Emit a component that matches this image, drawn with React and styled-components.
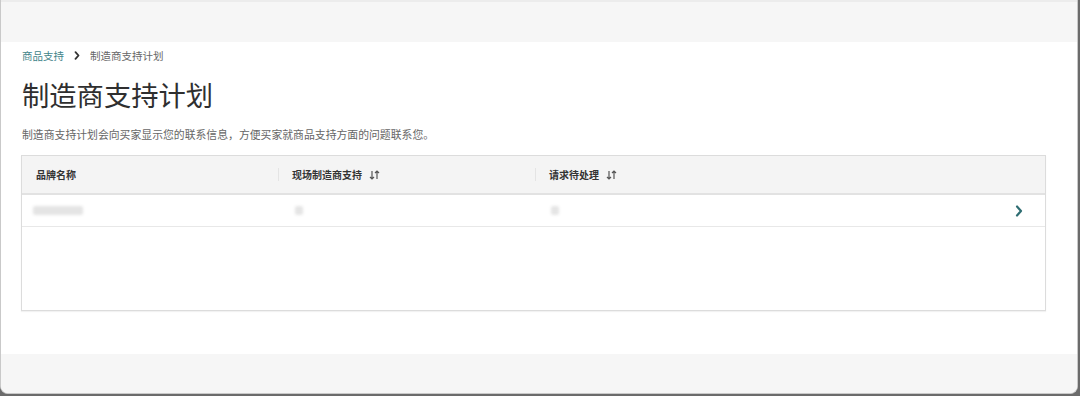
import React from "react";
import styled, { createGlobalStyle } from "styled-components";

const Global = createGlobalStyle`
  html, body { margin: 0; padding: 0; background: #6b6b6b; }
  body { font-family: "Noto Sans CJK SC", "Noto Sans", sans-serif; }
  * { box-sizing: border-box; }
`;

const Window = styled.div`
  width: 1078px;
  height: 394px;
  background: #fff;
  border: 1px solid #c9c9c9;
  border-top: none;
  border-radius: 0 0 8px 8px;
  overflow: hidden;
  display: flex;
  flex-direction: column;
`;

const Band = styled.div`
  height: ${(p) => p.h}px;
  background: #f6f6f6;
  border-top: ${(p) => (p.top ? "2px solid #ececec" : "none")};
  flex: none;
`;

const Content = styled.main`
  flex: 1;
  padding: 5px 32px 0 20px;
  display: flex;
  flex-direction: column;
`;

const Crumbs = styled.nav`
  display: flex;
  align-items: center;
  gap: 10px;
  font-size: 10.5px;
  height: 16px;
  padding-left: 1px;
`;

const CrumbLink = styled.span`
  color: #3f8489;
`;

const CrumbSep = styled.span`
  display: flex;
  align-items: center;
`;

const CrumbCurrent = styled.span`
  color: #666;
`;

const Title = styled.h1`
  margin: 14px 0 0 1px;
  font-size: 27.3px;
  font-weight: 400;
  color: #2f2f2f;
  line-height: 34px;
`;

const Desc = styled.p`
  margin: 16px 0 0 1px;
  font-size: 10.85px;
  color: #666;
  line-height: 14px;
`;

const Table = styled.div`
  margin-top: 14px;
  border: 1px solid #dcdcdc;
  width: 1025px;
  height: 156px;
  display: flex;
  flex-direction: column;
  box-shadow: 0 1px 1px rgba(0, 0, 0, 0.05);
`;

const Head = styled.div`
  display: grid;
  grid-template-columns: 256px 257px 257px 1fr;
  height: 39px;
  background: #f4f4f4;
  border-bottom: 2px solid #e2e2e2;
  align-items: center;
`;

const HeadCell = styled.div`
  display: flex;
  align-items: center;
  gap: 7px;
  height: 100%;
  padding-left: 14px;
  font-size: 10px;
  font-weight: 700;
  color: #333;
  position: relative;
  &::before {
    content: "";
    display: ${(p) => (p.first ? "none" : "block")};
    position: absolute;
    left: 0;
    top: 12px;
    bottom: 12px;
    width: 1px;
    background: #e4e4e4;
  }
`;

const Row = styled.div`
  display: grid;
  grid-template-columns: 256px 257px 257px 1fr;
  height: 32px;
  border-bottom: 1px solid #e8e8e8;
  align-items: center;
`;

const Cell = styled.div`
  padding-left: ${(p) => p.pl || 16}px;
  display: flex;
  align-items: center;
  justify-content: ${(p) => (p.end ? "flex-end" : "flex-start")};
  padding-right: ${(p) => (p.end ? 22 : 0)}px;
`;

const Blur = styled.div`
  width: ${(p) => p.w}px;
  height: 9px;
  background: #e4e4e4;
  filter: blur(1.5px);
  border-radius: 2px;
`;

const SortIcon = () => (
  <svg width="11" height="10" viewBox="0 0 11 10" fill="none" stroke="#555" strokeWidth="1.2">
    <path d="M3 1v8M1 7l2 2 2-2" />
    <path d="M8 9V1M6 3l2-2 2 2" />
  </svg>
);

const Chevron = ({ size = 12, color = "#2e6d72", w = 2.2 }) => (
  <svg width={(size * 2) / 3} height={size} viewBox="0 0 8 12" fill="none" stroke={color} strokeWidth={w} strokeLinecap="round" strokeLinejoin="round">
    <path d="M2 1.5l4 4.5-4 4.5" />
  </svg>
);

export default function App() {
  return (
    <>
      <Global />
      <Window>
        <Band h={42} top />
        <Content>
          <Crumbs>
            <CrumbLink>商品支持</CrumbLink>
            <CrumbSep><Chevron size={9} color="#333" w={2.4} /></CrumbSep>
            <CrumbCurrent>制造商支持计划</CrumbCurrent>
          </Crumbs>
          <Title>制造商支持计划</Title>
          <Desc>制造商支持计划会向买家显示您的联系信息，方便买家就商品支持方面的问题联系您。</Desc>
          <Table>
            <Head>
              <HeadCell first>品牌名称</HeadCell>
              <HeadCell>现场制造商支持 <SortIcon /></HeadCell>
              <HeadCell>请求待处理 <SortIcon /></HeadCell>
              <HeadCell first />
            </Head>
            <Row>
              <Cell pl={11}><Blur w={50} /></Cell>
              <Cell pl={17}><Blur w={8} /></Cell>
              <Cell pl={16}><Blur w={8} /></Cell>
              <Cell end><Chevron /></Cell>
            </Row>
          </Table>
        </Content>
        <Band h={39} />
      </Window>
    </>
  );
}
